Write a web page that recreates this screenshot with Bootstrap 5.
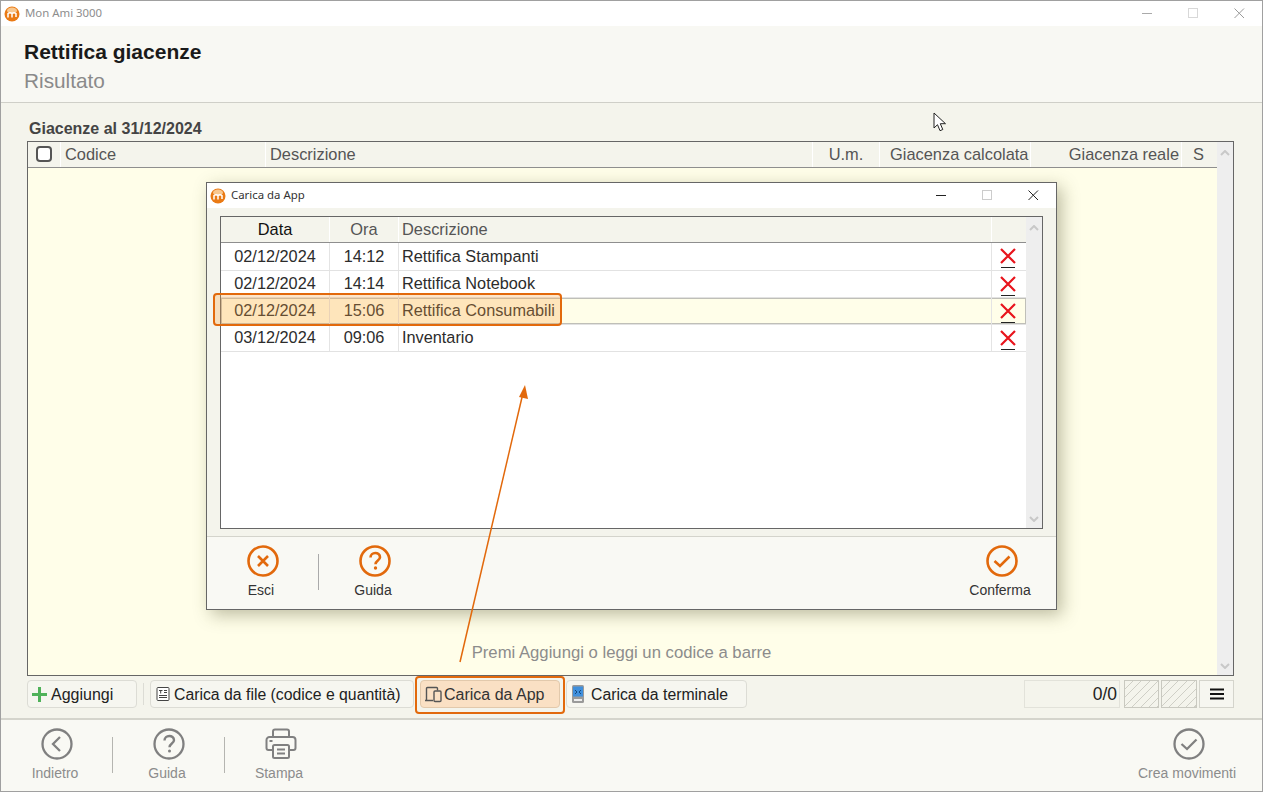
<!DOCTYPE html>
<html lang="it">
<head>
<meta charset="utf-8">
<title>Rettifica giacenze</title>
<link href="https://cdn.jsdelivr.net/npm/bootstrap@5.3.0/dist/css/bootstrap.min.css" rel="stylesheet">
<style>
html,body{margin:0;width:1263px;height:792px;overflow:hidden;background:#f4f4ec;font-family:"Liberation Sans",Arial,sans-serif;font-size:16px;line-height:18px;color:#222}
.appwin{position:relative;width:1263px;height:792px;border:1px solid #a0a0a0;background:#f4f4ec}
.tbar{height:25px;background:#fff;padding-left:3px;font-size:11.4px;gap:5px;color:#8d8d8d;font-family:"Noto Sans","Liberation Sans",sans-serif}
.tbar svg{flex:none}
.ttl{padding-bottom:2px}
.wctl{margin-left:auto;height:100%}
.wctl span{display:flex;width:46px;height:100%;align-items:center;justify-content:center;padding:0}
.headzone{height:77px;background:#f8f8f3;border-bottom:1px solid #cfcfc8;padding:14px 23px 0}
.headzone h1{font-size:21px;font-weight:700;line-height:23px;margin:0;color:#1a1a1a}
.headzone h2{font-size:20.800px;font-weight:400;line-height:23px;margin:6px 0 0;color:#8a8a8a}
.content{height:616px;padding:17px 28px 0 26px}
.gtitle{font-weight:700;color:#444;padding-left:2px;height:21px;line-height:17px}
.gridbox{height:535px;border:1px solid #666;background:#fffee9;display:flex}
.gridmain{flex:1;display:flex;flex-direction:column;min-width:0}
.hrow{display:flex;height:26px;background:#f4f4ec;border-bottom:1px solid #8e8e8e;color:#555;line-height:25px;font-size:16.400px}
.hrow>div{border-right:1px solid #fff;padding:0 4px;white-space:nowrap;overflow:hidden}
.hrow>div:last-child{border-right:0}
.ckb{width:16px;height:16px;border:2px solid #555;border-radius:4px;background:#fff;margin:4px 0 0 8px}
.scr{width:16px;background:#eeeeee;display:flex;flex-direction:column;justify-content:space-between;align-items:center;padding:8px 0 6px}
.emptyhint{flex:1;display:flex;align-items:flex-end;justify-content:center;padding:0 2px 13px 0;color:#8c8c8c;font-size:16.700px}
.tools{height:28px;margin-top:4px;width:1207px;gap:6px;align-items:stretch;line-height:29px}
.tbtn{border:1px solid #dcdcd5;border-radius:4px;background:#f6f6f0;display:flex;align-items:center;padding:0 0 0 3px;gap:3px;color:#222;white-space:nowrap}
.tsep{width:1px;background:#dcdcd5;margin:3px 0}
.tbtn.sel{background:#fae0c4;border-color:#e2c9ac;color:#333}
.counter{width:96px;border:1px solid #e2e2da;background:#f4f4ec;text-align:right;padding:0 2px;line-height:26px;color:#222;margin-left:auto;font-size:17.500px}
.hatch{width:35px;border:1px solid #c9c9c0;background:repeating-linear-gradient(135deg,#f4f4ec 0 5px,#cfcfc6 5px 6px)}
.menubtn{width:35px;border:1px solid #d4d4cc;display:flex;align-items:center;justify-content:center;background:#f6f6f0}
.botbar{height:73px;background:#f9f9f4;border-top:2px solid #d4d4cc;position:absolute;left:0;right:0;bottom:0;color:#8c8c8c;font-size:14px}
.actn{display:flex;flex-direction:column;align-items:center;line-height:16px;white-space:nowrap}
.actn svg{display:block;margin-bottom:5px;margin-left:4px}
.bsep{width:1px;height:36px;background:#b5b5b0;margin-top:17px}
.dlg{position:absolute;left:205px;top:181px;width:851px;height:428px;border:1px solid #666;background:#f4f4ec;box-shadow:5px 5px 16px rgba(70,70,30,.35);display:flex;flex-direction:column}
.dlgbar{height:25px;background:#fff;padding-left:3px;gap:5px;font-size:11.400px;color:#333;font-family:"Noto Sans","Liberation Sans",sans-serif}
.dlgbody{height:328px;padding:8px 13px 0}
.dlggrid{height:313px;border:1px solid #666;background:#fff;display:flex}
.drow{display:flex;height:27px;border-bottom:1px solid #e2e2e2;line-height:24px;color:#2c2c2c;font-size:16.300px}
.drow.first{height:28px;line-height:26px}
.drow>div{border-right:1px solid #e4e4e4;white-space:nowrap;flex:none}
.drow>div:last-child{border-right:0}
.drow.on{background:#fffee9;box-shadow:inset 0 0 0 1px #bfbfb8}
.cd{width:109px;text-align:center}.co{width:69px;text-align:center}.cx{width:593px;padding-left:3px}.cz{width:33px;display:flex;align-items:flex-start;justify-content:center;padding:5px 2px 0 0}
.dlgfoot{flex:1;background:#f9f9f4;border-top:1px solid #d4d4cc;color:#333;font-size:14px;padding-top:8px}
.mark-hi{position:absolute;border:2px solid #e2690c;border-radius:4px;background:rgba(250,165,70,.28);pointer-events:none}
.arrowlay{position:absolute;left:0;top:0;pointer-events:none}
.mouse{position:absolute;left:932px;top:111px}
</style>
</head>
<body>
<div class="appwin">
  <div class="tbar d-flex align-items-center">
    <svg width="16" height="16" viewBox="0 0 16 16"><circle cx="8" cy="8" r="7.500" fill="#ea7a14"/><ellipse cx="8" cy="4.500" rx="5" ry="3" fill="#f8c890"/><path d="M4 11.500V7.500q2-1.600 4 0q2-1.600 4 0V11M8 7.500V11.500" stroke="#fff" stroke-width="1.500" fill="none"/></svg>
    <span class="ttl">Mon Ami 3000</span>
    <div class="wctl d-flex">
      <span><svg width="11" height="11"><path d="M0 5.500H10" stroke="#aaa"/></svg></span>
      <span><svg width="11" height="11"><rect x=".5" y=".5" width="9" height="9" fill="none" stroke="#d8d8d8"/></svg></span>
      <span><svg width="11" height="11"><path d="M.5.500l9.500 9.500M10 .5L.5 10" stroke="#999"/></svg></span>
    </div>
  </div>
  <div class="headzone">
    <h1>Rettifica giacenze</h1>
    <h2>Risultato</h2>
  </div>
  <div class="content">
    <div class="gtitle">Giacenze al 31/12/2024</div>
    <div class="gridbox">
      <div class="gridmain">
        <div class="hrow">
          <div style="width:33px;padding:0"><div class="ckb"></div></div>
          <div style="width:205px">Codice</div>
          <div style="width:547px">Descrizione</div>
          <div style="width:67px;text-align:center">U.m.</div>
          <div style="width:151px;padding:0 0 0 10px">Giacenza calcolata</div>
          <div style="width:151px;text-align:right;padding-right:2px">Giacenza reale</div>
          <div style="width:34px;padding-left:11px">S</div>
        </div>
        <div class="emptyhint">Premi Aggiungi o leggi un codice a barre</div>
      </div>
      <div class="scr">
        <svg width="10" height="6"><path d="M1 5l4-4 4 4" fill="none" stroke="#c8c8c8" stroke-width="2"/></svg>
        <svg width="10" height="6"><path d="M1 1l4 4 4-4" fill="none" stroke="#c8c8c8" stroke-width="2"/></svg>
      </div>
    </div>
    <div class="tools d-flex">
      <div class="tbtn" style="width:110px">
        <svg width="17" height="17" viewBox="0 0 17 17"><path d="M8.500 1v15M1 8.500h15" stroke="#4fb25a" stroke-width="3"/></svg>Aggiungi
      </div>
      <div class="tsep"></div>
      <div class="tbtn" style="width:264px;gap:3px;font-size:15.800px">
        <svg width="16" height="16" viewBox="0 0 16 16" style="margin-left:1px"><rect x="2" y="1.500" width="12" height="13" rx="1" fill="#fff" stroke="#444"/><path d="M4 4.500h3.500M5.700 4.500v3M9 4.500h3M9 6.500h3M4 9.500h8M4 11.500h8" stroke="#444"/></svg>Carica da file (codice e quantità)
      </div>
      <div class="tbtn sel" style="width:140px;gap:2px">
        <svg width="18" height="18" viewBox="0 0 18 18"><path d="M2.500 15.500V3.500a1 1 0 0 1 1-1h9a1 1 0 0 1 1 1v2M1 15.500h8" fill="none" stroke="#555" stroke-width="1.400"/><rect x="10" y="6" width="7" height="10.500" rx="1" fill="none" stroke="#555" stroke-width="1.400"/></svg>Carica da App
      </div>
      <div class="tbtn" style="width:181px;gap:6px;font-size:15.800px">
        <svg width="14" height="20" viewBox="0 0 14 20" style="margin-left:1px"><rect x="1" y="1" width="12" height="18" rx="1.500" fill="#9a9a9a"/><rect x="2" y="2.500" width="10" height="10" fill="#3f8fdc"/><path d="M4 6l2 2-2 2M10 6L8 8l2 2" stroke="#134a80" fill="none"/><rect x="3" y="15" width="8" height="2" fill="#eee"/></svg>Carica da terminale
      </div>
      <div class="counter">0/0</div>
      <div class="hatch" style="margin-left:-2px"></div>
      <div class="hatch" style="margin-left:-4px;width:36px"></div>
      <div class="menubtn" style="margin-left:-4px"><svg width="14" height="12"><path d="M0 1.500h14M0 6h14M0 10.500h14" stroke="#111" stroke-width="2"/></svg></div>
    </div>
  </div>

  <div class="botbar d-flex">
    <div class="d-flex" style="padding-left:29px">
      <div class="actn" style="width:50px;margin-top:8px">
        <svg width="32" height="32" viewBox="0 0 32 32"><circle cx="16" cy="16" r="14.500" fill="none" stroke="#808080" stroke-width="2.300"/><path d="M19 9l-7 7 7 7" fill="none" stroke="#808080" stroke-width="2.300"/></svg>Indietro
      </div>
      <div class="bsep" style="margin-left:32px"></div>
      <div class="actn" style="width:40px;margin:8px 0 0 34px">
        <svg width="32" height="32" viewBox="0 0 32 32"><circle cx="16" cy="16" r="14.500" fill="none" stroke="#808080" stroke-width="2.300"/><path d="M11.500 12.500c0-6 9.500-6 9.500-.3 0 3.300-4.500 3.300-4.500 7" fill="none" stroke="#808080" stroke-width="2.400"/><circle cx="16.500" cy="23" r="1.500" fill="#808080"/></svg>Guida
      </div>
      <div class="bsep" style="margin-left:37px"></div>
      <div class="actn" style="width:50px;margin:8px 0 0 29px">
        <svg width="32" height="32" viewBox="0 0 32 32"><path d="M8 9V3.500A2 2 0 0 1 10 1.500h12a2 2 0 0 1 2 2V9" fill="none" stroke="#808080" stroke-width="2"/><path d="M7 22H3.500a2 2 0 0 1-2-2V12a3 3 0 0 1 3-3h23a3 3 0 0 1 3 3v8a2 2 0 0 1-2 2H25" fill="none" stroke="#808080" stroke-width="2"/><path d="M4.500 13h3" stroke="#808080" stroke-width="2"/><rect x="8" y="17" width="16" height="13" rx="1.500" fill="none" stroke="#808080" stroke-width="2"/><path d="M12 21.500h8M12 25.500h8" stroke="#808080" stroke-width="2"/></svg>Stampa
      </div>
    </div>
    <div class="actn ms-auto" style="margin-top:8px;margin-right:26px;width:98px">
      <svg width="32" height="32" viewBox="0 0 32 32"><circle cx="16" cy="16" r="14.500" fill="none" stroke="#808080" stroke-width="2.300"/><path d="M8.500 16l5.500 5 9.500-9.500" fill="none" stroke="#808080" stroke-width="2.300"/></svg>Crea movimenti
    </div>
  </div>

  <div class="dlg">
    <div class="dlgbar d-flex align-items-center">
      <svg width="16" height="16" viewBox="0 0 16 16"><circle cx="8" cy="8" r="7.500" fill="#ea7a14"/><ellipse cx="8" cy="4.500" rx="5" ry="3" fill="#f8c890"/><path d="M4 11.500V7.500q2-1.600 4 0q2-1.600 4 0V11M8 7.500V11.500" stroke="#fff" stroke-width="1.500" fill="none"/></svg>
      <span class="ttl">Carica da App</span>
      <div class="wctl d-flex">
        <span><svg width="11" height="11"><path d="M0 5.500H10" stroke="#222"/></svg></span>
        <span><svg width="11" height="11"><rect x=".5" y=".5" width="9" height="9" fill="none" stroke="#ccc"/></svg></span>
        <span><svg width="11" height="11"><path d="M.5.500l9.500 9.500M10 .5L.5 10" stroke="#222"/></svg></span>
      </div>
    </div>
    <div class="dlgbody">
      <div class="dlggrid">
        <div class="gridmain">
          <div class="hrow">
            <div style="width:109px;text-align:center;color:#111;padding:0">Data</div>
            <div style="width:69px;text-align:center;padding:0">Ora</div>
            <div style="width:593px;padding-left:3px">Descrizione</div>
            <div style="width:33px"></div>
          </div>
          <div class="drow first"><div class="cd">02/12/2024</div><div class="co">14:12</div><div class="cx">Rettifica Stampanti</div><div class="cz"><svg width="16" height="21" viewBox="0 0 16 21"><path d="M1 1l14 14M15 1L1 15" stroke="#e8141c" stroke-width="2.200"/><path d="M1 19.500h14" stroke="#222"/></svg></div></div>
          <div class="drow"><div class="cd">02/12/2024</div><div class="co">14:14</div><div class="cx">Rettifica Notebook</div><div class="cz"><svg width="16" height="21" viewBox="0 0 16 21"><path d="M1 1l14 14M15 1L1 15" stroke="#e8141c" stroke-width="2.200"/><path d="M1 19.500h14" stroke="#222"/></svg></div></div>
          <div class="drow on"><div class="cd">02/12/2024</div><div class="co">15:06</div><div class="cx">Rettifica Consumabili</div><div class="cz"><svg width="16" height="21" viewBox="0 0 16 21"><path d="M1 1l14 14M15 1L1 15" stroke="#e8141c" stroke-width="2.200"/><path d="M1 19.500h14" stroke="#222"/></svg></div></div>
          <div class="drow"><div class="cd">03/12/2024</div><div class="co">09:06</div><div class="cx">Inventario</div><div class="cz"><svg width="16" height="21" viewBox="0 0 16 21"><path d="M1 1l14 14M15 1L1 15" stroke="#e8141c" stroke-width="2.200"/><path d="M1 19.500h14" stroke="#222"/></svg></div></div>
        </div>
        <div class="scr">
          <svg width="10" height="6"><path d="M1 5l4-4 4 4" fill="none" stroke="#c8c8c8" stroke-width="2"/></svg>
          <svg width="10" height="6"><path d="M1 1l4 4 4-4" fill="none" stroke="#c8c8c8" stroke-width="2"/></svg>
        </div>
      </div>
    </div>
    <div class="dlgfoot d-flex">
      <div class="actn" style="width:50px;margin-left:29px">
        <svg width="32" height="32" viewBox="0 0 32 32"><circle cx="16" cy="16" r="14.500" fill="none" stroke="#e2690c" stroke-width="2.600"/><path d="M11 11l10 10M21 11L11 21" stroke="#e2690c" stroke-width="2.600"/></svg>Esci
      </div>
      <div class="bsep" style="margin:9px 0 0 32px;background:#aaa"></div>
      <div class="actn" style="width:40px;margin-left:34px">
        <svg width="32" height="32" viewBox="0 0 32 32"><circle cx="16" cy="16" r="14.500" fill="none" stroke="#e2690c" stroke-width="2.600"/><path d="M11.500 12.500c0-6 9.500-6 9.500-.3 0 3.300-4.500 3.300-4.500 7" fill="none" stroke="#e2690c" stroke-width="2.600"/><circle cx="16.500" cy="23" r="1.700" fill="#e2690c"/></svg>Guida
      </div>
      <div class="actn ms-auto" style="width:64px;margin-right:24px">
        <svg width="32" height="32" viewBox="0 0 32 32"><circle cx="16" cy="16" r="14.500" fill="none" stroke="#e2690c" stroke-width="2.600"/><path d="M8.500 16l5.500 5 9.500-9.500" fill="none" stroke="#e2690c" stroke-width="2.600"/></svg>Conferma
      </div>
    </div>
  </div>

  <div class="mark-hi" style="left:212px;top:292px;width:349px;height:33px"></div>
  <div class="mark-hi" style="left:414px;top:675px;width:150px;height:38px;background:transparent"></div>

  <svg class="arrowlay" width="1263" height="792">
    <path d="M459 661L522 392" stroke="#e2690c" stroke-width="1.500"/>
    <path d="M524 384l-6 12 9 2z" fill="#e2690c"/>
  </svg>
  <svg class="mouse" width="14" height="21" viewBox="0 0 14 21"><path d="M1 1v15l3.500-3.300 2.500 6 2.800-1.200-2.500-5.800H12.500z" fill="#fff" stroke="#222"/></svg>
</div>
</body>
</html>
